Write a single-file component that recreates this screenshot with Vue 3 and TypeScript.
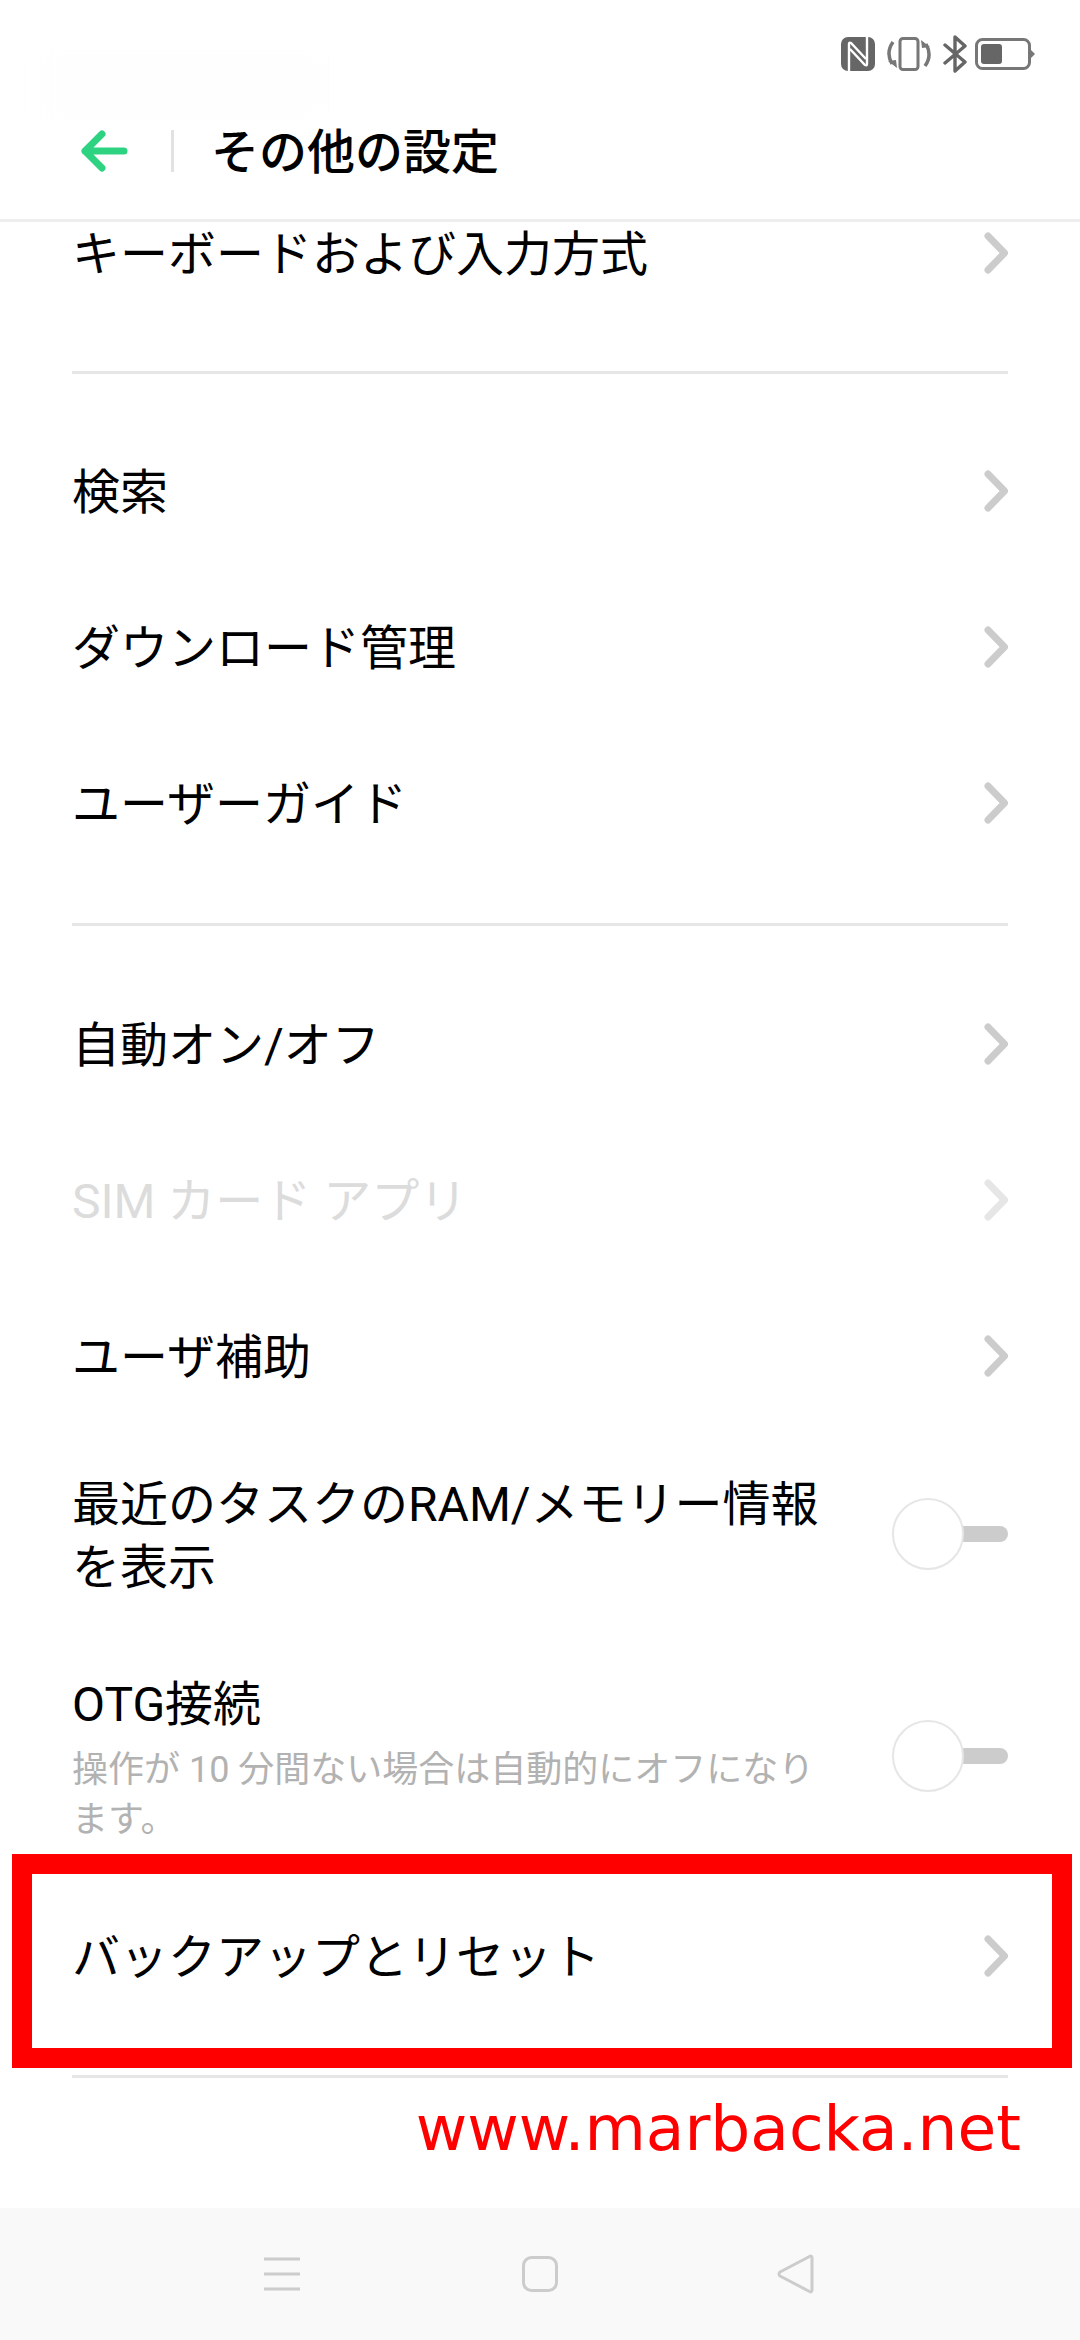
<script setup lang="ts">
interface Row {
  label: string
  sub?: string
  kind?: 'link' | 'toggle'
  dim?: boolean
  size?: 'double' | 'tall'
}

const groups: Row[][] = [
  [{ label: 'キーボードおよび入力方式' }],
  [{ label: '検索' }, { label: 'ダウンロード管理' }, { label: 'ユーザーガイド' }],
  [
    { label: '自動オン/オフ' },
    { label: 'SIM カード アプリ', dim: true },
    { label: 'ユーザ補助' },
    { label: '最近のタスクのRAM/メモリー情報を表示', kind: 'toggle', size: 'double' },
    { label: 'OTG接続', sub: '操作が 10 分間ない場合は自動的にオフになります。', kind: 'toggle', size: 'tall' },
    { label: 'バックアップとリセット' },
  ],
]
</script>

<template>
  <div class="screen">
    <header class="head">
      <div class="smudge"></div>
      <div class="status">
        <svg width="34" height="34" viewBox="0 0 34 34">
          <rect width="34" height="34" rx="7" fill="#666" />
          <path d="M8 34V7q0-2 2-1l15 16M26 0v27q0 2-2 1L9 12" fill="none" stroke="#fff" stroke-width="2.4" />
        </svg>
        <svg width="44" height="34" viewBox="0 0 44 34">
          <rect x="13" y="1.5" width="18" height="31" rx="3" fill="none" stroke="#777" stroke-width="3" />
          <path d="M6 5C1 12 1 20 5 27" fill="none" stroke="#777" stroke-width="3.5" />
          <path d="M38 29C43 22 43 14 39 7" fill="none" stroke="#777" stroke-width="3.5" />
          <path d="M1 24l8-1 1 8zM43 10l-8 1-1-8z" fill="#777" />
        </svg>
        <svg width="24" height="38" viewBox="0 0 24 38">
          <path d="M2 10l20 17-10 9V2l10 9L2 28" fill="none" stroke="#666" stroke-width="3.4" stroke-linejoin="round" stroke-linecap="round" />
        </svg>
        <svg class="bat" width="60" height="32" viewBox="0 0 60 32">
          <rect x="1.5" y="1.5" width="53" height="29" rx="6" fill="none" stroke="#777" stroke-width="3" />
          <rect x="6" y="6" width="21" height="20" rx="3" fill="#666" />
          <path d="M56 12l4 4-4 4z" fill="#777" />
        </svg>
      </div>
      <div class="bar">
        <svg class="back" width="48" height="42" viewBox="0 0 48 42">
          <path d="M44 21H5M22 4L5 21l17 17" fill="none" stroke="#2ed382" stroke-width="7" stroke-linecap="round" stroke-linejoin="round" />
        </svg>
        <span class="bar-sep"></span>
        <h1 class="title">その他の設定</h1>
      </div>
    </header>

    <main class="scroller">
      <div class="list">
        <section v-for="(group, g) in groups" :key="g" class="group">
          <div
            v-for="row in group"
            :key="row.label"
            class="row"
            :class="[row.size, { dim: row.dim }]"
          >
            <div class="text">
              <div class="label">{{ row.label }}</div>
              <div v-if="row.sub" class="sub">{{ row.sub }}</div>
            </div>
            <div v-if="row.kind === 'toggle'" class="toggle">
              <span class="track"></span>
              <span class="knob"></span>
            </div>
            <svg v-else class="chev" width="24" height="42" viewBox="0 0 24 42">
              <path d="M4 4l16.500 17L4 38" fill="none" stroke="currentColor" stroke-width="7" stroke-linecap="round" stroke-linejoin="round" />
            </svg>
          </div>
        </section>
      </div>
      <!-- annotations drawn over the screenshot -->
      <div class="mark"></div>
      <div class="site">www.marbacka.net</div>
    </main>

    <nav class="nav">
      <svg width="36" height="34" viewBox="0 0 36 34">
        <path d="M0 2h36M0 17h36M0 32h36" stroke="#ccc" stroke-width="3.200" />
      </svg>
      <svg width="36" height="36" viewBox="0 0 36 36">
        <rect x="1.500" y="1.500" width="33" height="33" rx="8" fill="none" stroke="#ccc" stroke-width="3" />
      </svg>
      <svg width="37" height="40" viewBox="0 0 37 40">
        <path d="M35 3.500v33a1.500 1.500 0 0 1-2.500 1L3 22a2.500 2.500 0 0 1 0-4L32.500 2.500a1.500 1.500 0 0 1 2.500 1z" fill="none" stroke="#ccc" stroke-width="3" stroke-linejoin="round" />
      </svg>
    </nav>
  </div>
</template>

<style scoped>
.screen {
  width: 1080px; height: 2340px;
  display: flex; flex-direction: column;
  background: #fff; color: #000;
  font-family: Roboto, "Noto Sans CJK JP", sans-serif;
  overflow: hidden;
}

.head { height: 222px; flex: none; position: relative; border-bottom: 3px solid #eee; box-sizing: border-box; }
.smudge {
  position: absolute; left: 40px; top: 50px; width: 290px; height: 70px;
  background: #fefefe; filter: blur(10px);
}
.status {
  position: relative;
  height: 106px; padding: 35px 45px 0 0; box-sizing: border-box;
  display: flex; justify-content: flex-end; gap: 12px;
}
.status > svg { margin-top: 2px; }
.status > svg:nth-child(3) { margin-top: 0; }
.status > svg.bat { margin-left: -4px; margin-top: 3px; }
.bar { display: flex; align-items: center; height: 90px; position: relative; }
.back { margin-left: 80px; }
.bar-sep { width: 3px; height: 42px; background: #e2e2e2; margin-left: 43px; }
.title { margin: 4px 0 0 37px; font-size: 48px; font-weight: 500; line-height: 1; }

.scroller { flex: 1; position: relative; overflow: hidden; }
.list { margin-top: -47px; padding: 0 72px; }

.group { padding-bottom: 41px; border-bottom: 3px solid #e6e6e6; margin-bottom: 40px; }
.group:first-child { padding-bottom: 40px; margin-bottom: 39px; }
.group:nth-child(2) { padding-bottom: 42px; }

.row { height: 156px; display: flex; align-items: center; justify-content: space-between; }
.row.double { height: 200px; }
.row.tall { height: 244px; }
.row.dim { color: #dcdcdc; }
.text { width: 760px; }
.label { font-size: 48px; line-height: 63px; margin-top: 3px; }
.row.tall .label { margin-top: 6px; }
.sub { font-size: 36px; line-height: 50px; color: #b2b2b2; margin-top: 9px; }

.chev { color: #ccc; flex: none; }
.row.dim .chev { color: #e6e6e6; }

.toggle { position: relative; width: 116px; height: 72px; flex: none; }
.track { position: absolute; right: 0; top: 28px; width: 60px; height: 16px; border-radius: 8px; background: #ccc; }
.knob {
  position: absolute; left: 0; top: 0; width: 72px; height: 72px; box-sizing: border-box;
  border-radius: 50%; background: #fff; border: 2px solid #e6e6e6;
}

.mark {
  position: absolute; left: 12px; top: 1632px; width: 1060px; height: 214px;
  box-sizing: border-box; border: 20px solid #f00;
}
.site {
  position: absolute; right: 59px; top: 1871px;
  font-family: "DejaVu Sans", sans-serif; font-size: 63px; line-height: 72px; color: #f00;
}

.nav {
  height: 132px; flex: none; background: #f9f9f9;
  display: flex; align-items: center;
}
.nav svg:nth-child(1) { margin-left: 264px; }
.nav svg:nth-child(2) { margin-left: 222px; }
.nav svg:nth-child(3) { margin-left: 219px; }
</style>

<style>
body { background: #fff; }
</style>
